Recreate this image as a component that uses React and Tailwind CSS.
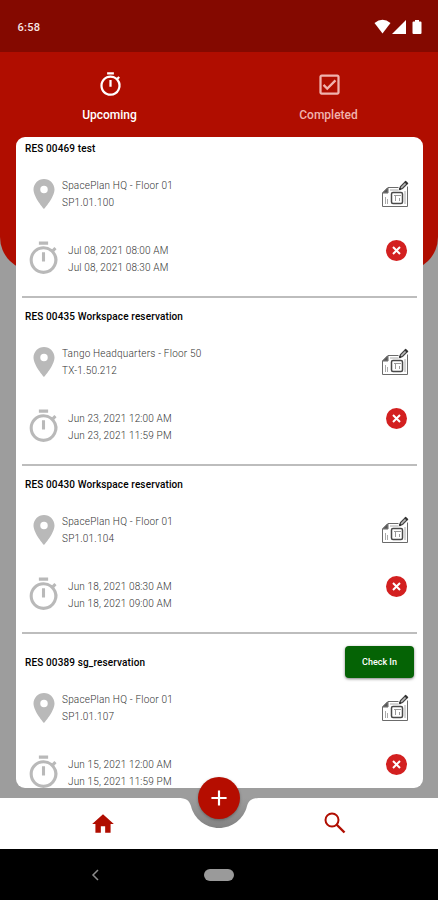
import React from "react";
import { MdOutlineTimer, MdOutlineCheckBox, MdPlace, MdHome, MdAdd } from "react-icons/md";

const RESERVATIONS = [
  {
    id: "00469",
    name: "test",
    location: "SpacePlan HQ - Floor 01",
    space: "SP1.01.100",
    start: "Jul 08, 2021 08:00 AM",
    end: "Jul 08, 2021 08:30 AM",
  },
  {
    id: "00435",
    name: "Workspace reservation",
    location: "Tango Headquarters - Floor 50",
    space: "TX-1.50.212",
    start: "Jun 23, 2021 12:00 AM",
    end: "Jun 23, 2021 11:59 PM",
  },
  {
    id: "00430",
    name: "Workspace reservation",
    location: "SpacePlan HQ - Floor 01",
    space: "SP1.01.104",
    start: "Jun 18, 2021 08:30 AM",
    end: "Jun 18, 2021 09:00 AM",
  },
  {
    id: "00389",
    name: "sg_reservation",
    location: "SpacePlan HQ - Floor 01",
    space: "SP1.01.107",
    start: "Jun 15, 2021 12:00 AM",
    end: "Jun 15, 2021 11:59 PM",
    checkIn: true,
  },
];

function FloorPlanIcon() {
  return (
    <svg width="28" height="28" viewBox="0 0 28 28" fill="none" stroke="#6b6b6b" strokeWidth="1">
      <path d="M7 7.500H17.500M26.500 6.500V26.500H1.500V13L7 7.500V13H1.500" />
      <path d="M2 12.500L6.500 8V12.500Z" fill="#555" />
      <path d="M9 10H17M4.500 17V24M6.500 19V24M24 11V24" stroke="#aaa" />
      <rect x="10.500" y="12.500" width="11" height="11" rx="1.500" stroke="#4a4a4a" strokeWidth="1.500" />
      <path d="M13 15.500H20M14.500 15.500V21M18.500 18V21" stroke="#999" />
      <path d="M18.500 9.500L19.500 6.500L24.500 1.500L26.500 3.500L21.500 8.500Z" fill="#bbb" stroke="#444" strokeWidth="1.200" />
      <path d="M24 1.500L26.500 4M18.500 9.500L20 8" stroke="#333" strokeWidth="2" />
    </svg>
  );
}

function CancelIcon() {
  return (
    <svg width="9" height="9" viewBox="0 0 9 9" fill="none" stroke="#fff" strokeWidth="2">
      <path d="M1 1L8 8M8 1L1 8" />
    </svg>
  );
}

function SearchIcon() {
  return (
    <svg width="22" height="22" viewBox="0 0 22 22" fill="none" stroke="#b00d00" strokeWidth="2">
      <circle cx="8" cy="8" r="6.500" />
      <path d="M12.500 12.500L20.500 20.500" strokeWidth="2.400" />
    </svg>
  );
}

function StatusBar() {
  return (
    <div className="relative flex h-[52px] items-center justify-between bg-[#840900] pl-[17.5px] pr-[15px] pt-[3px]">
      <span className="pt-[2px] text-[11px] font-medium tracking-[0.3px] text-[#f7e6e5]">6:58</span>
      <svg className="-mt-px" width="49" height="16" viewBox="0 0 49 16" fill="#fff">
        <path d="M0.500 4Q8.500-2.500 16.500 4L8.500 14.500Z" />
        <path d="M18 15L32 1V15Z" />
        <path d="M41 1H45V2.500H46.500Q47.500 2.500 47.500 3.500V14Q47.500 15 46.500 15H39.500Q38.500 15 38.500 14V3.500Q38.500 2.500 39.500 2.500H41Z" />
      </svg>
    </div>
  );
}

function Tabs() {
  return (
    <div className="relative flex h-[85px] pt-[19px] text-[12px] font-medium">
      <button className="flex flex-1 flex-col items-center text-white">
        <MdOutlineTimer size={27} className="ml-px" />
        <span className="mt-[8px] leading-[18px]">Upcoming</span>
      </button>
      <button className="flex flex-1 flex-col items-center text-[#f0b3ae]">
        <MdOutlineCheckBox size={27} className="ml-px" />
        <span className="mt-[8px] leading-[18px]">Completed</span>
      </button>
    </div>
  );
}

function Reservation({ item }) {
  return (
    <article className="border-b-2 border-[#bdbdbd] pt-[10px]">
      <div className={`flex items-center justify-between px-[3px] ${item.checkIn ? "mb-[9px] h-9" : "mb-[19px] h-4"}`}>
        <h2 className="text-[10px] font-medium tracking-[0.13px] text-black">
          RES {item.id} {item.name}
        </h2>
        {item.checkIn && (
          <button className="h-8 w-[69px] rounded-[4px] bg-[#056305] pt-px text-[9px] font-medium text-white shadow-[0_1px_3px_rgba(0,0,0,0.5)]">
            Check In
          </button>
        )}
      </div>
      <div className="flex h-[37px] items-center">
        <MdPlace size={36} className="ml-[4px] shrink-0 text-[#b9b9b9]" />
        <div className="flex-1 text-[10px] leading-[17px] tracking-[0.2px] font-light text-[#333]">
          <p>{item.location}</p>
          <p>{item.space}</p>
        </div>
        <div className="mr-[8px] mt-px">
          <FloorPlanIcon />
        </div>
      </div>
      <div className="mb-[19px] mt-[28px] flex h-[37px] items-center">
        <MdOutlineTimer size={37} className="ml-[3px] shrink-0 text-[#b9b9b9]" />
        <div className="ml-[6px] flex-1 text-[10px] leading-[17px] tracking-[0.15px] font-light text-[#333]">
          <p>{item.start}</p>
          <p>{item.end}</p>
        </div>
        <button className="mb-[17px] mr-[10px] grid h-[21px] w-[21px] place-items-center rounded-full bg-[#d32020]">
          <CancelIcon />
        </button>
      </div>
    </article>
  );
}

function BottomNav() {
  return (
    <nav className="relative flex h-[51px] items-start justify-between bg-white pl-[90px] pr-[92px]">
      <MdHome size={26} className="mt-[13px] text-[#b00d00]" />
      <div className="mt-[14px]">
        <SearchIcon />
      </div>
      <svg className="absolute left-[178px] top-0" width="82" height="32" viewBox="0 0 82 32">
        <defs>
          <linearGradient id="notch" x1="0" y1="0" x2="0" y2="1">
            <stop offset="0" stopColor="#9d9d9d" />
            <stop offset="1" stopColor="#838383" />
          </linearGradient>
        </defs>
        <path d="M0 0C8 0 11 2 13 8C16 21 28 30 41 30C54 30 66 21 69 8C71 2 74 0 82 0Z" fill="url(#notch)" />
      </svg>
      <button className="absolute -top-[21px] left-[198px] grid h-[42px] w-[42px] place-items-center rounded-full bg-[#b50d00] text-white shadow-[0_1px_3px_rgba(0,0,0,0.3)]">
        <MdAdd size={26} />
      </button>
    </nav>
  );
}

function SystemBar() {
  return (
    <div className="grid h-[51px] grid-cols-3 items-center bg-black">
      <svg className="ml-[91px]" width="8" height="12" viewBox="0 0 8 12" fill="none" stroke="#8c8c8c" strokeWidth="1.500">
        <path d="M7 1L2 6L7 11" />
      </svg>
      <div className="h-3 w-[30px] justify-self-center rounded-full bg-[#9a9a9a]" />
    </div>
  );
}

export default function App() {
  return (
    <div className="relative flex h-[900px] w-[438px] flex-col overflow-hidden bg-[#9d9d9d] font-['Roboto',sans-serif]">
      <div className="absolute inset-x-0 top-0 h-[271px] rounded-b-[34px] bg-[#b00d00]" />
      <StatusBar />
      <Tabs />
      <main className="relative ml-4 mr-[15px] h-[651px] overflow-hidden rounded-[9px] bg-white px-[6px]">
        <div className="-mt-[7px]">
          {RESERVATIONS.map((item) => (
            <Reservation key={item.id} item={item} />
          ))}
        </div>
      </main>
      <div className="h-[10px] shrink-0" />
      <BottomNav />
      <SystemBar />
    </div>
  );
}
